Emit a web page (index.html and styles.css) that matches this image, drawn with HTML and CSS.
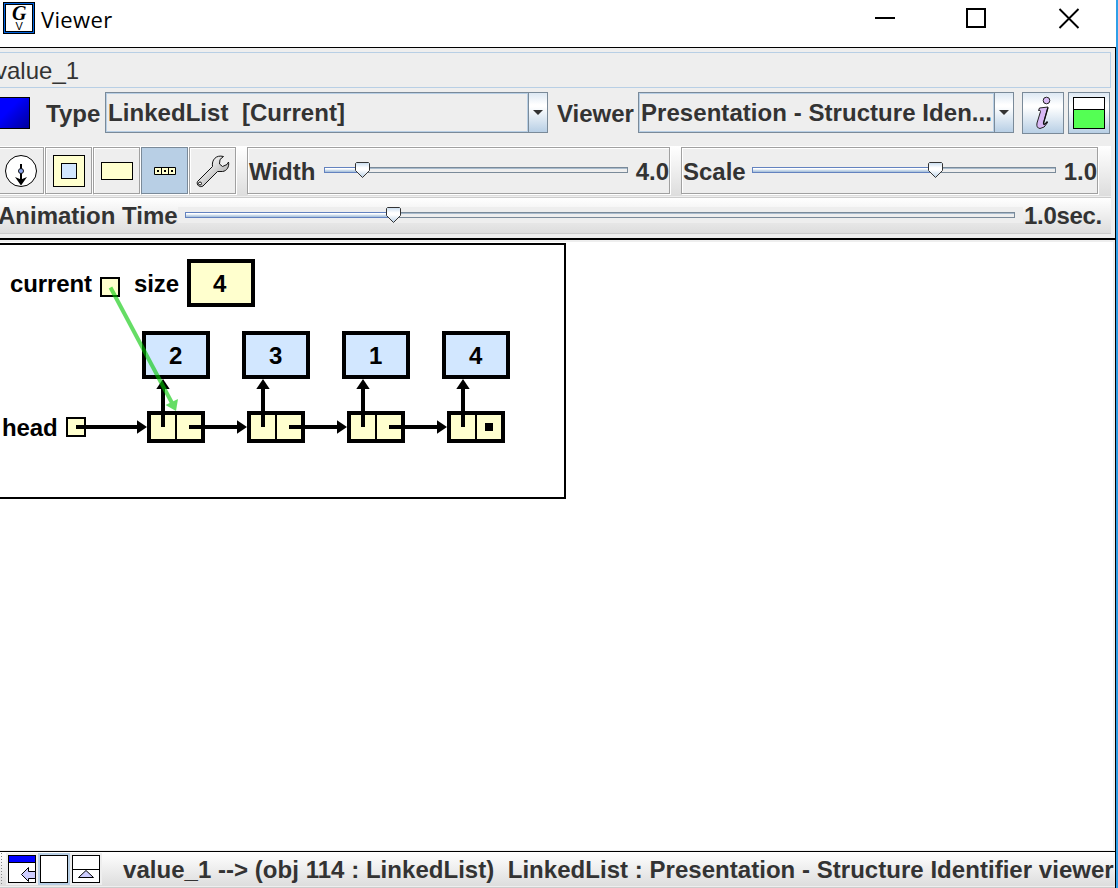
FILE: index.html
```html
<!DOCTYPE html>
<html lang="en">
<head>
<meta charset="utf-8">
<title>Viewer</title>
<link rel="stylesheet" href="styles.css">
</head>
<body>
<div class="window">
  <header class="titlebar">
    <svg class="app-icon" width="32" height="32" viewBox="0 0 32 32">
      <rect width="32" height="32" fill="#000"/><rect x="1" y="1" width="30" height="30" fill="#0063e0"/>
      <rect x="2" y="2" width="28" height="28" fill="#000"/><rect x="3" y="3" width="26" height="26" fill="#fff"/>
      <text class="logo-g" x="9" y="17.500">G</text><text class="logo-v" x="12.5" y="28">V</text>
    </svg>
    <h1 class="title">Viewer</h1>
    <svg class="controls" width="206" height="24" viewBox="0 0 206 24" fill="none" stroke="#000">
      <path d="M0 12H20" stroke-width="2"/>
      <rect x="92" y="3" width="18" height="18" stroke-width="2"/>
      <path d="M184.500 3L203.500 22M203.500 3L184.500 22" stroke-width="1.900"/>
    </svg>
  </header>
  <main class="panel">
    <div class="expression"><span>value_1</span></div>
    <div class="choices">
      <i class="swatch"></i>
      <span class="label type-label">Type</span>
      <div class="combo type-combo"><span class="value">LinkedList&nbsp; [Current]</span><b class="drop"><svg width="10" height="5"><path d="M0 0H10L5 5Z" fill="#333"/></svg></b></div>
      <span class="label viewer-label">Viewer</span>
      <div class="combo viewer-combo"><span class="value">Presentation - Structure Iden...</span><b class="drop"><svg width="10" height="5"><path d="M0 0H10L5 5Z" fill="#333"/></svg></b></div>
      <div class="metal info"><svg width="40" height="40" viewBox="0 0 40 40">
        <circle cx="23.500" cy="7.500" r="3.300" fill="#d8b8f5" stroke="#222"/>
        <path d="M16.500 15L25 14L20.500 30Q20.500 32 22 31Q23 30 24 28.500L24.500 29.500Q21.500 35.500 17 35.500Q13 35 14 30L17.500 18.500Q17.500 16.500 15.500 17.500Z" fill="#d8b8f5" stroke="#222"/>
        <path d="M25 14.500L20.500 30Q20.500 32 22 31L24.500 29" fill="none" stroke="#111" stroke-width="1.300"/>
      </svg></div>
      <div class="metal split"><svg width="32" height="32"><rect x=".5" y=".5" width="31" height="31" fill="#fff" stroke="#000"/><path d="M.5 12.500H31.500V31.500H.5Z" fill="#54ff54" stroke="#000"/></svg></div>
    </div>
    <div class="toolbar">
      <div class="tool first"><svg width="34" height="34" viewBox="0 0 34 34">
        <circle cx="17" cy="17" r="15.500" fill="#fff" stroke="#000"/>
        <path d="M17 10V29" stroke="#000" stroke-width="2"/><path d="M11 23L17 25.500L23 23L17 31.500Z" fill="#000"/><circle cx="17" cy="17" r="2.500" fill="#8ca6ef" stroke="#111"/>
      </svg></div>
      <div class="tool"><svg width="32" height="32"><rect x=".5" y=".5" width="31" height="31" fill="#ffffce" stroke="#000"/><rect x="8.500" y="8.500" width="15" height="15" fill="#d2e7ff" stroke="#000"/></svg></div>
      <div class="tool"><svg width="32" height="18"><rect x=".5" y=".5" width="31" height="17" fill="#ffffce" stroke="#000"/></svg></div>
      <div class="tool selected"><svg width="22" height="8"><path d="M.5 .5H21.500V7.500H.5Z" fill="#ffffce" stroke="#000"/><path d="M7.500 0V8M14.500 0V8" stroke="#000"/><path d="M3 3H5V5H3ZM10 3H12V5H10ZM17 3H19V5H17Z"/></svg></div>
      <div class="tool"><svg width="34" height="34" viewBox="0 0 34 34">
        <defs><linearGradient id="steel" x1="0" y1="0" x2="1" y2="1"><stop offset=".2" stop-color="#fff"/><stop offset=".8" stop-color="#aaa"/></linearGradient></defs>
        <path d="M27.500 2.500L24 5.500L23.500 10L26.500 12.500L31 10.500L32.500 8C33.500 12.500 31 17 26.500 17.500L21.500 17.500L7 32C4 34 0 31 1.500 27.500L16.500 12.500C15.500 6 20 .5 27.500 2.500Z" fill="url(#steel)" stroke="#111"/>
        <circle cx="4" cy="29.500" r="1.500" fill="#fff" stroke="#111"/>
      </svg></div>
      <div class="group width-group"><span class="label">Width</span>
        <div class="slider"><i class="fill" style="width:38px"></i><svg class="thumb" style="left:31px" width="15" height="16"><use href="#thumb"/></svg></div>
        <span class="label amount">4.0</span></div>
      <div class="group scale-group"><span class="label">Scale</span>
        <div class="slider"><i class="fill" style="width:183px"></i><svg class="thumb" style="left:176px" width="15" height="16"><use href="#thumb"/></svg></div>
        <span class="label amount">1.0</span></div>
    </div>
    <div class="animation"><span class="label">Animation Time</span>
      <div class="time-track"><div class="slider"><i class="fill" style="width:208px"></i><svg class="thumb" style="left:201px" width="15" height="16"><use href="#thumb"/></svg></div></div>
      <span class="label seconds">1.0sec.</span></div>
    <section class="canvas">
      <svg class="diagram" width="566" height="256" viewBox="0 243 566 256">
        <defs>
          <linearGradient id="thumb-fill" x1="0" y1="0" x2="0" y2="1"><stop offset="0" stop-color="#c8dcef"/><stop offset=".35" stop-color="#fff"/><stop offset=".5" stop-color="#fff"/><stop offset="1" stop-color="#b8cfe5"/></linearGradient>
          <path id="thumb" d="M1.500 .5H13.500L14.500 1.500V8.500L7.500 15.500L.5 8.500V1.500Z" fill="url(#thumb-fill)" stroke="#333"/>
          <g id="node"><rect x="149" y="413" width="54" height="28" fill="#ffffce" stroke="#000" stroke-width="4"/><path d="M176 413V441" stroke="#000" stroke-width="2"/>
            <path d="M163 427V386" stroke="#000" stroke-width="4"/><path d="M156.300 389L163 379L169.700 389Z"/>
            <rect x="144" y="333" width="64" height="44" fill="#d2e7ff" stroke="#000" stroke-width="4"/></g>
          <g id="next"><path d="M189 427H239" stroke="#000" stroke-width="4"/><path d="M237 420.300L247 427L237 433.700Z"/></g>
        </defs>
        <path d="M0 244H565V498H0" fill="none" stroke="#000" stroke-width="2"/>
        <text x="10" y="292">current</text>
        <rect x="101" y="278" width="18" height="18" fill="#ffffce" stroke="#000" stroke-width="2"/>
        <text x="134" y="292">size</text>
        <rect x="189" y="261" width="64" height="44" fill="#ffffce" stroke="#000" stroke-width="4"/>
        <text x="213" y="292">4</text>
        <text x="2" y="436">head</text>
        <rect x="67" y="418" width="18" height="18" fill="#ffffce" stroke="#000" stroke-width="2"/>
        <path d="M76 427H139" stroke="#000" stroke-width="4"/><path d="M137 420.300L147 427L137 433.700Z"/>
        <use href="#node"/><use href="#node" x="100"/><use href="#node" x="200"/><use href="#node" x="300"/>
        <use href="#next"/><use href="#next" x="100"/><use href="#next" x="200"/>
        <rect x="485" y="423" width="8" height="8"/>
        <text x="169" y="364">2</text><text x="269" y="364">3</text><text x="369" y="364">1</text><text x="469" y="364">4</text>
        <g opacity=".6"><path d="M110.500 287.500L172 403" stroke="#00c800" stroke-width="4"/><path d="M165.500 405L176 411L178 399Z" fill="#00c800"/></g>
      </svg>
    </section>
    <footer class="status">
      <i class="grip"></i>
      <div class="layout"><svg width="28" height="28"><rect x=".5" y=".5" width="27" height="27" fill="#fff" stroke="#000"/><rect x="1" y="1" width="26" height="6" fill="#00f"/><path d="M0 7.500H28" stroke="#000"/><path d="M13.500 19.500L20.500 12.500V16.500H27.500V23.500H20.500V26.500Z" fill="#ceceff" stroke="#000"/></svg></div>
      <div class="layout chosen"><svg width="28" height="28"><rect x=".5" y=".5" width="27" height="27" fill="#fff" stroke="#000"/></svg></div>
      <div class="layout"><svg width="28" height="28"><rect x=".5" y=".5" width="27" height="27" fill="#fff" stroke="#000"/><path d="M0 14.500H28" stroke="#000"/><path d="M6.500 22.500L14 15.500L21.500 22.500Z" fill="#ceceff" stroke="#000"/></svg></div>
      <span class="label">value_1 --&gt; (obj 114 : LinkedList)&nbsp; LinkedList : Presentation - Structure Identifier viewer</span>
    </footer>
  </main>
</div>
</body>
</html>
```
FILE: styles.css
```css
* { box-sizing: border-box; }
body { margin: 0; overflow: hidden; }
svg { display: block; flex: none; }
.window { width: 1118px; height: 888px; border-right: 2px solid #2f9fe8; background: #fff; overflow: hidden; font: 24px/28px "Liberation Sans", Arial, sans-serif; color: #333; }
.titlebar { height: 47px; display: flex; align-items: flex-start; padding: 2px 35px 0 3px; }
.title { margin: 2px 0 0 6px; font: 400 22px/30px "Open Sans", "Noto Sans", sans-serif; letter-spacing: .35px; color: #000; }
.controls { margin: 4px 0 0 auto; }
.logo-g { font: italic bold 20px "Liberation Serif", serif; }
.logo-v { font: 11px "Liberation Sans", sans-serif; }
.panel { height: 841px; border-top: 1px solid #000; border-right: 1px solid #000; background: #eee; display: flex; flex-direction: column; padding-top: 4px; }
.label { font-weight: bold; white-space: pre; flex: none; }
.expression { width: 1111px; height: 36px; border: solid #b8cfe5; border-width: 1px 1px 1px 0; flex: none; display: flex; align-items: center; padding-top: 2px; }
.expression span { margin-left: -5px; }
.choices { height: 58px; flex: none; display: flex; padding-top: 4px; align-items: flex-start; }
.swatch { width: 30px; height: 32px; margin: 5px 16px 0 0; border: solid #000; border-width: 1px 1px 1px 0; background: linear-gradient(135deg, #00f 35%, #00009c); }
.type-label { width: 59px; margin-top: 8px; }
.combo { display: flex; height: 41px; border: 1px solid #7a8a99; flex: none; }
.combo .value { flex: 1; font-weight: bold; padding: 6px 0 0 2px; white-space: pre; box-shadow: inset 1px 1px #b8cfe5, inset -1px -1px #b8cfe5; line-height: 28px; letter-spacing: .05px; }
.drop { width: 19px; border-left: 1px solid #7a8a99; display: flex; align-items: center; justify-content: center; }
.drop, .metal { background: linear-gradient(#dde8f3, #fff 30%, #fff 35%, #b8cfe5); }
.type-combo { width: 443px; }
.viewer-label { margin: 8px 0 0 9px; width: 81px; }
.viewer-combo { width: 376px; }
.metal { width: 42px; height: 42px; border: 1px solid #7a8a99; flex: none; }
.info { margin: 0 4px 0 8px; }
.split { padding: 4px; }
.toolbar { width: 1111px; height: 50px; flex: none; display: flex; align-items: flex-start; padding-top: 1px; background: linear-gradient(#fff, #ddd); }
.tool { width: 47px; height: 47px; flex: none; margin-right: 1px; display: flex; align-items: center; justify-content: center; border: 1px solid #a0a0a0; background: #eee; box-shadow: inset 1px 1px #fff, 1px 1px #fff; }
.first { margin-left: -3px; }
.selected { border-color: #7a8a99; background: #b8cfe5; box-shadow: 1px 1px #fff; }
.group { height: 47px; flex: none; display: flex; align-items: center; border: 1px solid #a0a0a0; background: #eee; box-shadow: inset 1px 1px #fff, 1px 1px #fff; }
.group .label { padding-top: 3px; }
.width-group { width: 423px; margin-left: 10px; padding-left: 1px; }
.scale-group { width: 417px; margin-left: 11px; padding-left: 1px; }
.slider { position: relative; width: 304px; height: 6px; flex: none; border: 1px solid #7a8a99; box-shadow: inset 0 1px #a8bbcd; }
.group .slider { margin: -1px 8px 0 auto; }
.fill { display: block; margin: -1px; height: 6px; border: 1px solid #6382bf; background: linear-gradient(#fff 25%, #d3e1ef 50%, #a3bdd9); }
.thumb { position: absolute; top: -6px; margin-left: -1px; }
.animation { height: 38px; flex: none; width: 1111px; margin-top: 1px; display: flex; align-items: flex-start; padding-top: 4px; border-top: 1px solid #ccc; background: linear-gradient(#fff, #ddd 35px, #ccc 35px, #ccc 36px, #eee 36px); }
.animation .label:first-child { margin-left: -2px; width: 180px; }
.seconds { margin-left: 1px; letter-spacing: -.3px; }
.time-track { width: 845px; height: 16px; margin: 5px 0 0 0; padding: 5px 7px; background: #eee; }
.time-track .slider { width: 830px; }
.canvas { width: 1115px; flex: none; height: 614px; margin-top: 3px; border: solid #000; border-width: 2px 0 1px; background: #fff; padding-top: 3px; box-shadow: inset 0 2px #eee, inset -2px -1px #f1f1f1; }
.diagram text { font: bold 24px "Liberation Sans", Arial, sans-serif; letter-spacing: -.1px; fill: #000; }
.status { height: 36px; flex: none; display: flex; align-items: flex-start; overflow: hidden; padding-top: 1px; background: linear-gradient(#fff, #ddd 34px, #eee 34px, #eee 35px, #ccc 35px); }
.grip { width: 3px; height: 32px; margin-right: 3px; background: repeating-linear-gradient(#888 0 1px, transparent 1px 3px) 1px 0 / 1px 32px no-repeat; }
.layout { padding: 2px; background: #eee; width: 32px; height: 32px; flex: none; }
.chosen { background: #b8cfe5; }
.status .label { margin: 3px 0 0 21px; letter-spacing: .035px; }
```
